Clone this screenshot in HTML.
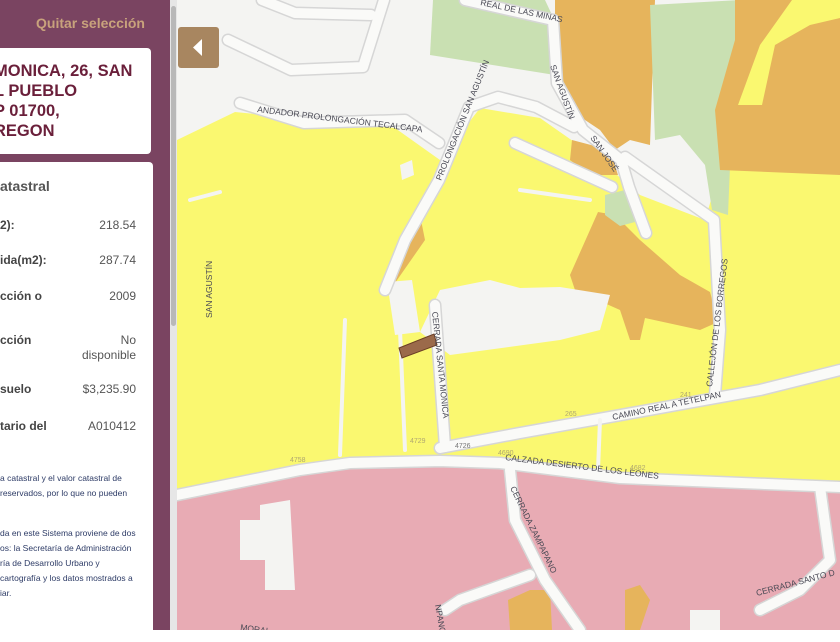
<!DOCTYPE html>
<html><head><meta charset="utf-8"><style>
html,body{margin:0;padding:0;width:840px;height:630px;overflow:hidden;font-family:"Liberation Sans",Arial,sans-serif;}
#left{position:absolute;left:0;top:0;width:170px;height:630px;background:#7a4461;}
#sb{position:absolute;left:170px;top:0;width:7px;height:630px;background:#e6e6e6;}
#sb div{position:absolute;left:1px;top:6px;width:5px;height:320px;background:#b8b8b8;border-radius:3px;}
.q{position:absolute;left:36px;top:15px;color:#c8a27c;font-weight:bold;font-size:14px;}
.addr{position:absolute;left:-6px;top:48px;width:157px;height:106px;background:#fff;border-radius:4px;}
.addr div{position:absolute;left:0;top:13px;color:#6a1f3a;font-weight:bold;font-size:16.5px;line-height:20px;white-space:nowrap;}
.info{position:absolute;left:-6px;top:162px;width:159px;height:480px;background:#fff;border-radius:4px;}
.t{position:absolute;top:16px;left:6px;font-size:14px;font-weight:bold;color:#555;}
.r{position:absolute;left:6px;width:136px;font-size:12px;color:#444;}
.r b{position:absolute;left:0;top:0;}
.r span{position:absolute;right:0;top:0;text-align:right;color:#555;line-height:15px;}
.n{position:absolute;left:6px;font-size:8.5px;color:#2d3b66;line-height:15px;white-space:nowrap;}
#map{position:absolute;left:177px;top:0;width:663px;height:630px;}
#back{position:absolute;left:178px;top:27px;width:41px;height:41px;background:#a88660;border-radius:3px;}
</style></head><body>
<div id="left">
<div class="q">Quitar selección</div>
<div class="addr"><div>MONICA, 26, SAN<br>L PUEBLO<br>P 01700,<br>REGON</div></div>
<div class="info">
<div class="t">atastral</div>
<div class="r" style="top:56px"><b>2):</b><span>218.54</span></div>
<div class="r" style="top:91px"><b>ida(m2):</b><span>287.74</span></div>
<div class="r" style="top:127px"><b>cción o</b><span>2009</span></div>
<div class="r" style="top:171px"><b>cción</b><span>No<br>disponible</span></div>
<div class="r" style="top:220px"><b>suelo</b><span>$3,235.90</span></div>
<div class="r" style="top:257px"><b>tario del</b><span>A010412</span></div>
<div class="n" style="top:309px">a catastral y el valor catastral de<br>reservados, por lo que no pueden</div>
<div class="n" style="top:364px">da en este Sistema proviene de dos<br>os: la Secretaría de Administración<br>ría de Desarrollo Urbano y<br>cartografía y los datos mostrados a<br>iar.</div>
</div>
</div>
<div id="sb"><div></div></div>
<svg id="map" viewBox="177 0 663 630" width="663" height="630">
<rect x="177" y="0" width="663" height="630" fill="#f4f4f2"/>
<polygon fill="#c9e0b2" points="433,0 545,0 552,15 555,75 430,55"/>
<polygon fill="#faf870" points="177,140 235,112 395,128 440,160 480,108 540,118 600,160 640,195 705,220 720,170 840,170 840,485 620,472 500,460 340,460 177,490"/>
<polygon fill="#e6b45c" points="555,0 655,0 650,145 630,140 615,150 600,130 570,110 555,60"/>
<polygon fill="#c9e0b2" points="650,5 740,0 735,45 728,215 712,210 705,165 680,135 655,140"/>
<polygon fill="#e6b45c" points="735,0 840,0 840,175 720,170 715,110 735,40"/>
<polygon fill="#faf870" points="738,105 760,45 792,0 840,0 840,18 810,25 775,45 762,105"/>
<polygon fill="#e6b45c" points="572,140 610,150 618,175 590,175 570,160"/>
<polygon fill="#e6b45c" points="598,212 615,215 640,240 680,275 710,292 718,322 700,330 645,318 640,340 630,340 620,310 575,290 570,275"/>
<polygon fill="#c9e0b2" points="605,195 625,190 635,222 620,226 605,215"/>
<polygon fill="#e6b45c" points="410,222 420,215 425,240 395,283 385,285 405,245"/>
<polygon fill="#f4f4f2" points="440,290 490,280 520,288 560,287 610,295 600,330 560,340 450,355 420,332"/>
<polygon fill="#f4f4f2" points="387,282 412,280 420,332 395,335"/>
<polygon fill="#f4f4f2" points="400,165 412,160 414,175 402,180"/>
<polygon fill="#e8abb4" points="177,492 340,467 500,465 840,487 840,630 177,630"/>
<polygon fill="#f4f4f2" points="260,505 290,500 295,590 265,590 265,560 240,560 240,520 260,520"/>
<polygon fill="#f4f4f2" points="690,610 720,610 720,630 690,630"/>
<polygon fill="#e6b45c" points="508,600 530,590 550,590 552,630 510,630"/>
<polygon fill="#e6b45c" points="625,590 640,585 650,600 640,630 625,630"/>
<g fill="none" stroke-linecap="round" stroke-linejoin="round">
<g stroke="#d6d6d6" stroke-width="13">
<polyline points="177,495 300,470 350,463 440,461 500,463 620,478 840,487"/>
<polyline points="440,448 520,433 660,408 760,390 840,370"/>
<polyline points="435,305 445,447"/>
<polyline points="510,470 515,520 545,580 580,630"/>
<polyline points="385,290 405,240 439,180 469,107 498,97 536,107 574,127"/>
<polyline points="465,0 553,20 557,83 583,130 621,160 629,187 646,233"/>
<polyline points="240,103 304,123 405,120 439,143"/>
<polyline points="625,157 714,220 720,330 715,395"/>
<polyline points="515,143 612,187"/>
<polyline points="228,40 291,70 363,67 384,0"/>
<polyline points="262,0 295,13 371,15"/>
<polyline points="445,610 460,600 530,575"/>
<polyline points="820,487 830,560 800,590 760,610"/>
</g>
<g stroke="#fafaf8" stroke-width="10">
<polyline points="177,495 300,470 350,463 440,461 500,463 620,478 840,487"/>
<polyline points="440,448 520,433 660,408 760,390 840,370"/>
<polyline points="435,305 445,447"/>
<polyline points="510,470 515,520 545,580 580,630"/>
<polyline points="385,290 405,240 439,180 469,107 498,97 536,107 574,127"/>
<polyline points="465,0 553,20 557,83 583,130 621,160 629,187 646,233"/>
<polyline points="240,103 304,123 405,120 439,143"/>
<polyline points="625,157 714,220 720,330 715,395"/>
<polyline points="515,143 612,187"/>
<polyline points="228,40 291,70 363,67 384,0"/>
<polyline points="262,0 295,13 371,15"/>
<polyline points="445,610 460,600 530,575"/>
<polyline points="820,487 830,560 800,590 760,610"/>
</g>
<g stroke="#f4f4f2" stroke-width="4">
<polyline points="345,320 340,455"/><polyline points="400,330 405,450"/><polyline points="600,420 598,470"/>
<polyline points="190,200 220,192"/><polyline points="520,190 590,200"/>
</g>
</g>
<polygon fill="#9b6a4a" stroke="#6b3e25" stroke-width="1" points="399,348 434,334 437,345 402,358"/>
<g font-family="Liberation Sans,Arial,sans-serif" font-size="8.5" fill="#4a4a55">
<text transform="translate(257,112) rotate(7)">ANDADOR PROLONGACIÓN TECALCAPA</text>
<text transform="translate(441,181) rotate(-68)">PROLONGACIÓN SAN AGUSTÍN</text>
<text transform="translate(480,5) rotate(12)">REAL DE LAS MINAS</text>
<text transform="translate(550,66) rotate(70)">SAN AGUSTÍN</text>
<text transform="translate(590,138) rotate(55)">SAN JOSÉ</text>
<text transform="translate(432,312) rotate(84)">CERRADA SANTA MONICA</text>
<text transform="translate(613,420) rotate(-12)">CAMINO REAL A TETELPAN</text>
<text transform="translate(505,460) rotate(7)">CALZADA DESIERTO DE LOS LEONES</text>
<text transform="translate(510,488) rotate(64)">CERRADA ZAMPAPANO</text>
<text transform="translate(712,387) rotate(-83)">CALLEJÓN DE LOS BORREGOS</text>
<text transform="translate(757,596) rotate(-15)">CERRADA SANTO D</text>
<text transform="translate(212,318) rotate(-90)">SAN AGUSTÍN</text>
<text transform="translate(435,605) rotate(80)">NPANO</text>
<text transform="translate(240,630) rotate(8)">MORAL</text>
</g>
<g font-family="Liberation Sans,Arial,sans-serif" font-size="7" fill="#b0a870">
<text x="410" y="443">4729</text><text x="455" y="448" fill="#777">4726</text><text x="290" y="462">4758</text>
<text x="498" y="455">4690</text><text x="630" y="470">4682</text><text x="565" y="416">265</text><text x="680" y="397">241</text>
</g>
</svg>
<div id="back"><svg width="41" height="41"><polygon points="24,12 24,29 15,20.5" fill="#fff"/></svg></div>
</body></html>
